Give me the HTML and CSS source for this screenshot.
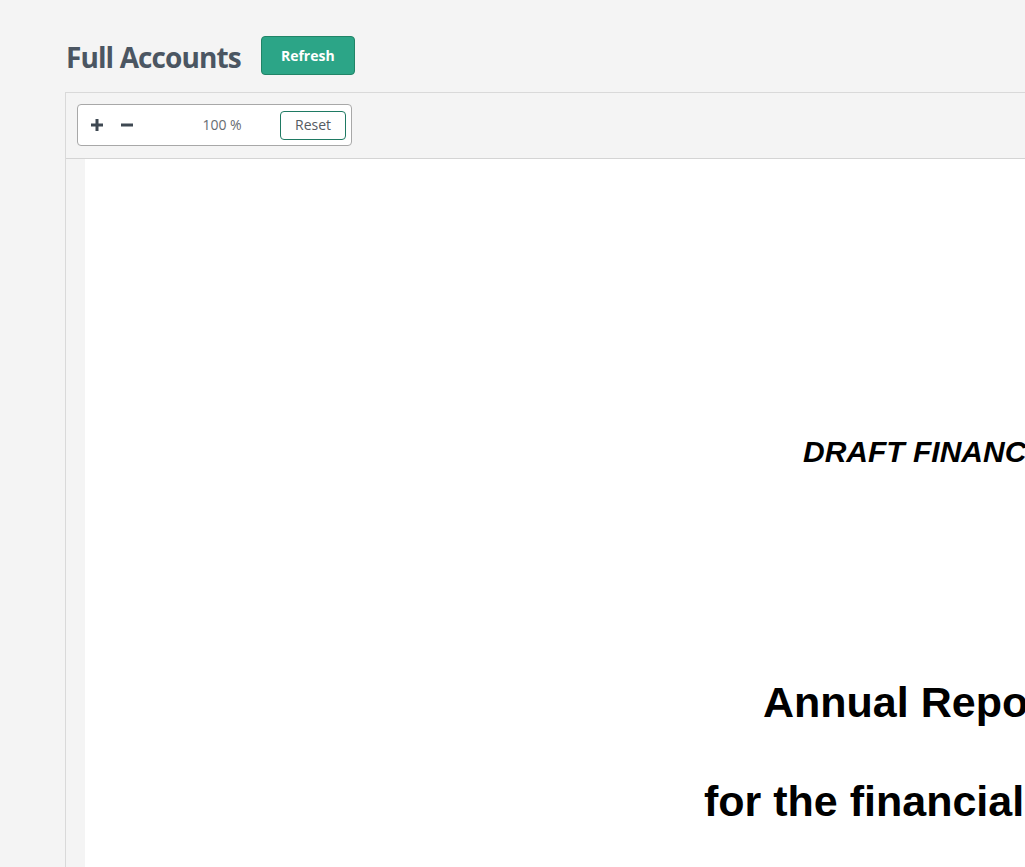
FILE: index.html
```html
<!DOCTYPE html>
<html lang="en">
<head>
<meta charset="utf-8">
<title>Full Accounts</title>
<link rel="stylesheet" href="styles.css">
</head>
<body>
<main class="main">
  <header class="header">
    <h1 class="title">Full Accounts</h1>
    <button class="btn-refresh" type="button">Refresh</button>
  </header>
  <section class="viewer">
    <div class="toolbar">
      <div class="zoom-box">
        <button class="zoom-btn" type="button" aria-label="Zoom in">
          <svg width="12" height="12" viewBox="0 0 12 12"><rect x="4.5" y="0" width="3" height="12" fill="#3e4852"/><rect x="0" y="4.5" width="12" height="3" fill="#3e4852"/></svg>
        </button>
        <button class="zoom-btn" type="button" aria-label="Zoom out">
          <svg width="12" height="12" viewBox="0 0 12 12"><rect x="0" y="4.5" width="12" height="3" fill="#3e4852"/></svg>
        </button>
        <span class="zoom-level">100 %</span>
        <button class="btn-reset" type="button">Reset</button>
      </div>
    </div>
    <div class="doc-area">
      <div class="page">
        <p class="line draft">DRAFT FINANCIAL STATEMENTS</p>
        <p class="line annual">Annual Report and Financial Statements</p>
        <p class="line period">for the financial year ended</p>
      </div>
    </div>
  </section>
</main>
</body>
</html>
```

FILE: styles.css
```css
html, body {
  margin: 0;
  padding: 0;
  background: #f4f4f4;
  overflow: hidden;
  height: 867px;
}
.main {
  padding: 36px 0 0 65px;
  font-family: "Open Sans", "Liberation Sans", sans-serif;
}
.header {
  display: flex;
  align-items: center;
  gap: 20px;
  height: 39px;
  margin-bottom: 17px;
}
.title {
  margin: 0;
  padding-left: 1px;
  font-size: 28px;
  line-height: 39px;
  font-weight: 700;
  letter-spacing: -0.9px;
  color: #4b5662;
  position: relative;
  top: 2px;
}
.btn-refresh {
  height: 39px;
  width: 94px;
  padding: 0;
  border: 1px solid #218467;
  border-radius: 4px;
  background: #2ca587;
  color: #ffffff;
  font-family: "Open Sans", "Liberation Sans", sans-serif;
  font-size: 14px;
  font-weight: 700;
}
.viewer {
  width: 1200px;
  border-top: 1px solid #d9d9d9;
  border-left: 1px solid #d9d9d9;
  background: #f4f4f4;
}
.toolbar {
  padding: 11px 11px 12px 11px;
  border-bottom: 1px solid #d4d4d4;
  background: #f4f4f4;
}
.zoom-box {
  display: flex;
  align-items: center;
  width: 273px;
  height: 40px;
  border: 1px solid #a8a8a8;
  border-radius: 4px;
  background: #ffffff;
}
.zoom-btn {
  width: 30px;
  height: 30px;
  padding: 0;
  border: 0;
  background: transparent;
  display: flex;
  align-items: center;
  justify-content: center;
}
.zoom-btn:first-child {
  margin-left: 4px;
}
.zoom-level {
  width: 100px;
  margin-left: 30px;
  text-align: center;
  font-size: 14px;
  line-height: 18px;
  color: #666c72;
}
.btn-reset {
  margin-left: 8px;
  width: 66px;
  height: 29px;
  padding: 0 0 2px 0;
  border: 1px solid #1f7a63;
  border-radius: 4px;
  background: #ffffff;
  color: #555b62;
  font-family: "Open Sans", "Liberation Sans", sans-serif;
  font-size: 14px;
}
.doc-area {
  padding-left: 19px;
  height: 720px;
}
.page {
  background: #ffffff;
  height: 100%;
  padding-top: 276px;
  box-sizing: border-box;
  font-family: "Liberation Sans", Arial, sans-serif;
  color: #000000;
  white-space: nowrap;
}
.line {
  margin: 0;
  font-weight: 700;
}
.draft {
  font-size: 30px;
  line-height: 34px;
  font-style: italic;
  margin-left: 718px;
}
.annual {
  font-size: 43px;
  line-height: 48px;
  margin-top: 209px;
  margin-left: 678px;
}
.period {
  font-size: 43px;
  line-height: 48px;
  margin-top: 51px;
  margin-left: 619px;
}
```
